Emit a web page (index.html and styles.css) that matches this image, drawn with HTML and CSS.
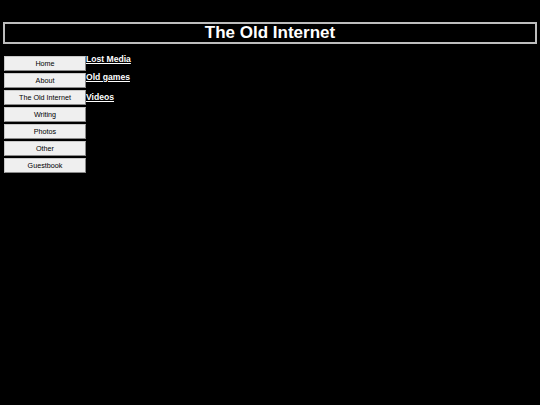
FILE: index.html
```html
<!DOCTYPE html>
<html>
<head>
<meta charset="utf-8">
<link rel="stylesheet" href="styles.css">
</head>
<body>
<h1 class="title">The Old Internet</h1>
<div class="main">
  <nav class="nav">
    <button class="navbtn">Home</button>
    <button class="navbtn">About</button>
    <button class="navbtn">The Old Internet</button>
    <button class="navbtn">Writing</button>
    <button class="navbtn">Photos</button>
    <button class="navbtn">Other</button>
    <button class="navbtn">Guestbook</button>
  </nav>
  <div class="links">
    <a class="link first" href="#">Lost Media</a>
    <a class="link second" href="#">Old games</a>
    <a class="link third" href="#">Videos</a>
  </div>
</div>
</body>
</html>
```
FILE: styles.css
```css
html, body {
  margin: 0;
  padding: 0;
  background: #000;
  color: #fff;
  font-family: "Liberation Sans", Arial, sans-serif;
}
body {
  padding: 22px 3px 0 3px;
}
.title {
  margin: 0;
  height: 18px;
  border: 2px solid #bdbdbd;
  font-size: 17px;
  line-height: 18px;
  font-weight: bold;
  text-align: center;
  color: #fff;
}
.main {
  display: flex;
  margin-top: 12px;
  padding-left: 1px;
}
.nav {
  display: flex;
  flex-direction: column;
  gap: 2px;
  width: 82px;
}
.navbtn {
  display: block;
  width: 82px;
  height: 15px;
  margin: 0;
  padding: 0;
  background: #efefef;
  border: 1px solid #8a8a8a;
  border-top-color: #c8c8c8;
  border-left-color: #c8c8c8;
  color: #000;
  font-family: "Liberation Sans", Arial, sans-serif;
  font-size: 7.2px;
  line-height: 13px;
  text-align: center;
}
.links {
  display: flex;
  flex-direction: column;
  align-items: flex-start;
  margin-top: -2px;
}
.link {
  display: block;
  color: #fff;
  font-weight: bold;
  font-size: 8.6px;
  line-height: 10px;
  text-decoration: underline;
}
.first {
  margin-top: 0;
}
.second {
  margin-top: 8px;
}
.third {
  margin-top: 10px;
}
```
